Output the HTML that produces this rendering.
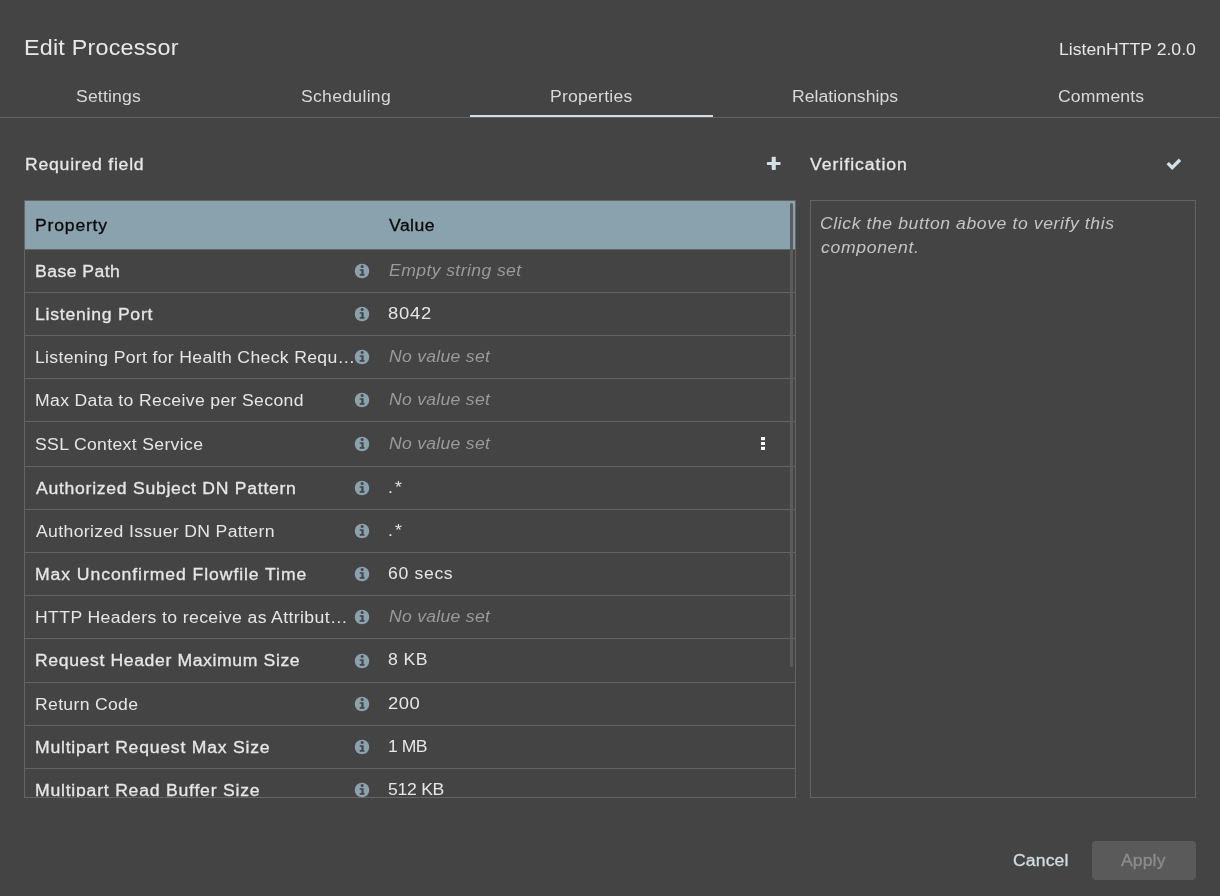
<!DOCTYPE html>
<html><head><meta charset="utf-8">
<style>
html,body{margin:0;padding:0;width:1220px;height:896px;overflow:hidden;background:#444444;}
body{position:relative;font-family:"Liberation Sans",sans-serif;}
.a{position:absolute;white-space:pre;line-height:30px;font-family:"Liberation Sans",sans-serif;will-change:transform;}
.s{position:absolute;}
</style></head>
<body>
<div class="s" style="left:0;top:117px;width:1220px;height:1px;background:#646464"></div>
<div class="s" style="left:470px;top:115px;width:243px;height:2px;background:#cfe0ea"></div>
<svg class="s" style="left:766px;top:156px" width="16" height="15" viewBox="0 0 16 15">
<rect x="0.9" y="5.9" width="13.7" height="3.2" rx="0.8" fill="#d3e0e6"/>
<rect x="5.7" y="0.7" width="4.1" height="13.3" rx="0.8" fill="#d3e0e6"/>
</svg>
<svg class="s" style="left:1164px;top:156px" width="20" height="16" viewBox="0 0 20 16">
<polyline points="3.7,7.1 8.2,11.6 16.0,3.8" fill="none" stroke="#d3e0e6" stroke-width="3.4"/>
</svg>
<div class="s" style="left:24px;top:200px;width:770px;height:596px;border:1px solid #646464"></div>
<div class="s" style="left:25px;top:201px;width:770px;height:48px;background:#8aa2ae"></div>
<div class="s" style="left:25px;top:249px;width:770px;height:1px;background:#646464"></div>
<svg class="s" style="left:353.6px;top:263.0px" width="16" height="16" viewBox="0 0 16 16"><circle cx="8" cy="8" r="7.25" fill="#8aa2ae"/><circle cx="8.1" cy="3.6" r="1.5" fill="#444444"/><path d="M5.7,6.2H9.6V11H10.4V12.7H5.7V11H7.4V7.8H5.7Z" fill="#444444"/></svg>
<div class="s" style="left:25px;top:292px;width:770px;height:1px;background:#646464"></div>
<svg class="s" style="left:353.6px;top:306.0px" width="16" height="16" viewBox="0 0 16 16"><circle cx="8" cy="8" r="7.25" fill="#8aa2ae"/><circle cx="8.1" cy="3.6" r="1.5" fill="#444444"/><path d="M5.7,6.2H9.6V11H10.4V12.7H5.7V11H7.4V7.8H5.7Z" fill="#444444"/></svg>
<div class="s" style="left:25px;top:335px;width:770px;height:1px;background:#646464"></div>
<svg class="s" style="left:353.6px;top:349.0px" width="16" height="16" viewBox="0 0 16 16"><circle cx="8" cy="8" r="7.25" fill="#8aa2ae"/><circle cx="8.1" cy="3.6" r="1.5" fill="#444444"/><path d="M5.7,6.2H9.6V11H10.4V12.7H5.7V11H7.4V7.8H5.7Z" fill="#444444"/></svg>
<div class="s" style="left:25px;top:378px;width:770px;height:1px;background:#646464"></div>
<svg class="s" style="left:353.6px;top:392.0px" width="16" height="16" viewBox="0 0 16 16"><circle cx="8" cy="8" r="7.25" fill="#8aa2ae"/><circle cx="8.1" cy="3.6" r="1.5" fill="#444444"/><path d="M5.7,6.2H9.6V11H10.4V12.7H5.7V11H7.4V7.8H5.7Z" fill="#444444"/></svg>
<div class="s" style="left:25px;top:421px;width:770px;height:1px;background:#646464"></div>
<svg class="s" style="left:353.6px;top:436.0px" width="16" height="16" viewBox="0 0 16 16"><circle cx="8" cy="8" r="7.25" fill="#8aa2ae"/><circle cx="8.1" cy="3.6" r="1.5" fill="#444444"/><path d="M5.7,6.2H9.6V11H10.4V12.7H5.7V11H7.4V7.8H5.7Z" fill="#444444"/></svg>
<div class="s" style="left:25px;top:466px;width:770px;height:1px;background:#646464"></div>
<svg class="s" style="left:761.3px;top:436px" width="4" height="16" viewBox="0 0 4 16"><rect x="0" y="1" width="4" height="3.2" fill="#fff"/><rect x="0" y="6" width="4" height="3" fill="#fff"/><rect x="0" y="10.8" width="4" height="3.2" fill="#fff"/></svg>
<svg class="s" style="left:353.6px;top:480.0px" width="16" height="16" viewBox="0 0 16 16"><circle cx="8" cy="8" r="7.25" fill="#8aa2ae"/><circle cx="8.1" cy="3.6" r="1.5" fill="#444444"/><path d="M5.7,6.2H9.6V11H10.4V12.7H5.7V11H7.4V7.8H5.7Z" fill="#444444"/></svg>
<div class="s" style="left:25px;top:509px;width:770px;height:1px;background:#646464"></div>
<svg class="s" style="left:353.6px;top:523.0px" width="16" height="16" viewBox="0 0 16 16"><circle cx="8" cy="8" r="7.25" fill="#8aa2ae"/><circle cx="8.1" cy="3.6" r="1.5" fill="#444444"/><path d="M5.7,6.2H9.6V11H10.4V12.7H5.7V11H7.4V7.8H5.7Z" fill="#444444"/></svg>
<div class="s" style="left:25px;top:552px;width:770px;height:1px;background:#646464"></div>
<svg class="s" style="left:353.6px;top:566.0px" width="16" height="16" viewBox="0 0 16 16"><circle cx="8" cy="8" r="7.25" fill="#8aa2ae"/><circle cx="8.1" cy="3.6" r="1.5" fill="#444444"/><path d="M5.7,6.2H9.6V11H10.4V12.7H5.7V11H7.4V7.8H5.7Z" fill="#444444"/></svg>
<div class="s" style="left:25px;top:595px;width:770px;height:1px;background:#646464"></div>
<svg class="s" style="left:353.6px;top:609.0px" width="16" height="16" viewBox="0 0 16 16"><circle cx="8" cy="8" r="7.25" fill="#8aa2ae"/><circle cx="8.1" cy="3.6" r="1.5" fill="#444444"/><path d="M5.7,6.2H9.6V11H10.4V12.7H5.7V11H7.4V7.8H5.7Z" fill="#444444"/></svg>
<div class="s" style="left:25px;top:638px;width:770px;height:1px;background:#646464"></div>
<svg class="s" style="left:353.6px;top:652.5px" width="16" height="16" viewBox="0 0 16 16"><circle cx="8" cy="8" r="7.25" fill="#8aa2ae"/><circle cx="8.1" cy="3.6" r="1.5" fill="#444444"/><path d="M5.7,6.2H9.6V11H10.4V12.7H5.7V11H7.4V7.8H5.7Z" fill="#444444"/></svg>
<div class="s" style="left:25px;top:682px;width:770px;height:1px;background:#646464"></div>
<svg class="s" style="left:353.6px;top:696.0px" width="16" height="16" viewBox="0 0 16 16"><circle cx="8" cy="8" r="7.25" fill="#8aa2ae"/><circle cx="8.1" cy="3.6" r="1.5" fill="#444444"/><path d="M5.7,6.2H9.6V11H10.4V12.7H5.7V11H7.4V7.8H5.7Z" fill="#444444"/></svg>
<div class="s" style="left:25px;top:725px;width:770px;height:1px;background:#646464"></div>
<svg class="s" style="left:353.6px;top:739.0px" width="16" height="16" viewBox="0 0 16 16"><circle cx="8" cy="8" r="7.25" fill="#8aa2ae"/><circle cx="8.1" cy="3.6" r="1.5" fill="#444444"/><path d="M5.7,6.2H9.6V11H10.4V12.7H5.7V11H7.4V7.8H5.7Z" fill="#444444"/></svg>
<div class="s" style="left:25px;top:768px;width:770px;height:1px;background:#646464"></div>
<svg class="s" style="left:353.6px;top:782.0px" width="16" height="16" viewBox="0 0 16 16"><circle cx="8" cy="8" r="7.25" fill="#8aa2ae"/><circle cx="8.1" cy="3.6" r="1.5" fill="#444444"/><path d="M5.7,6.2H9.6V11H10.4V12.7H5.7V11H7.4V7.8H5.7Z" fill="#444444"/></svg>
<div class="s" style="left:790px;top:203px;width:3px;height:464px;border-radius:1.5px;background:#5c5c5c"></div>
<div class="s" style="left:810px;top:200px;width:384px;height:596px;border:1px solid #646464"></div>
<div class="s" style="left:1092px;top:841px;width:104px;height:39px;border-radius:4px;background:#5a5a5a"></div>
<div style="position:absolute;left:0;top:0;width:1220px;height:896px;overflow:hidden">
<div class="a" style="left:24px;top:33px;font-size:22px;letter-spacing:0.203px;color:#e8e8e8;transform:scaleX(1.06);transform-origin:0 0;">Edit Processor</div>
<div class="a" style="left:1059px;top:35px;font-size:16px;letter-spacing:0.012px;color:#e6e6e6;transform:scaleX(1.1);transform-origin:0 0;">ListenHTTP 2.0.0</div>
<div class="a" style="left:76px;top:82px;font-size:16px;letter-spacing:0.156px;color:#d9d9d9;transform:scaleX(1.1);transform-origin:0 0;">Settings</div>
<div class="a" style="left:301px;top:82px;font-size:16px;letter-spacing:0.263px;color:#d9d9d9;transform:scaleX(1.1);transform-origin:0 0;">Scheduling</div>
<div class="a" style="left:550px;top:82px;font-size:16px;letter-spacing:0.202px;color:#d9d9d9;transform:scaleX(1.1);transform-origin:0 0;">Properties</div>
<div class="a" style="left:792px;top:82px;font-size:16px;letter-spacing:0.030px;color:#d9d9d9;transform:scaleX(1.1);transform-origin:0 0;">Relationships</div>
<div class="a" style="left:1058px;top:82px;font-size:16px;letter-spacing:0.130px;color:#d9d9d9;transform:scaleX(1.1);transform-origin:0 0;">Comments</div>
<div class="a" style="left:25px;top:150px;font-size:16px;letter-spacing:0.699px;color:#e6e6e6;transform:scaleX(1.1);transform-origin:0 0;-webkit-text-stroke:0.3px #e6e6e6;">Required field</div>
<div class="a" style="left:810px;top:150px;font-size:16px;letter-spacing:0.893px;color:#e6e6e6;transform:scaleX(1.1);transform-origin:0 0;-webkit-text-stroke:0.3px #e6e6e6;">Verification</div>
<div class="a" style="left:35px;top:211px;font-size:16px;letter-spacing:0.727px;color:#0a0a0a;transform:scaleX(1.1);transform-origin:0 0;-webkit-text-stroke:0.3px #0a0a0a;">Property</div>
<div class="a" style="left:389px;top:211px;font-size:16px;letter-spacing:0.409px;color:#0a0a0a;transform:scaleX(1.1);transform-origin:0 0;-webkit-text-stroke:0.3px #0a0a0a;">Value</div>
<div class="a" style="left:820px;top:209px;font-size:16px;letter-spacing:0.530px;color:#c4c4c4;transform:scaleX(1.1);transform-origin:0 0;font-style:italic;">Click the button above to verify this</div>
<div class="a" style="left:821px;top:233px;font-size:16px;letter-spacing:0.606px;color:#c4c4c4;transform:scaleX(1.1);transform-origin:0 0;font-style:italic;">component.</div>
<div class="a" style="left:1013px;top:846px;font-size:16px;letter-spacing:0.109px;color:#cfdde4;transform:scaleX(1.1);transform-origin:0 0;-webkit-text-stroke:0.3px #cfdde4;">Cancel</div>
<div class="a" style="left:1121px;top:846px;font-size:16px;letter-spacing:0.091px;color:#8c8c8c;transform:scaleX(1.1);transform-origin:0 0;-webkit-text-stroke:0.3px #8c8c8c;">Apply</div>
</div>
<div style="position:absolute;left:25px;top:250px;width:770px;height:547px;overflow:hidden">
<div style="position:absolute;left:-25px;top:-250px;width:1220px;height:896px">
<div class="a" style="left:35px;top:257px;font-size:16px;letter-spacing:0.409px;color:#e6e6e6;transform:scaleX(1.1);transform-origin:0 0;-webkit-text-stroke:0.3px #e6e6e6;">Base Path</div>
<div class="a" style="left:389px;top:256px;font-size:16px;letter-spacing:0.364px;color:#9a9a9a;transform:scaleX(1.1);transform-origin:0 0;font-style:italic;">Empty string set</div>
<div class="a" style="left:35px;top:300px;font-size:16px;letter-spacing:0.685px;color:#e6e6e6;transform:scaleX(1.1);transform-origin:0 0;-webkit-text-stroke:0.3px #e6e6e6;">Listening Port</div>
<div class="a" style="left:388px;top:299px;font-size:16px;letter-spacing:0.638px;color:#e6e6e6;transform:scaleX(1.15);transform-origin:0 0;">8042</div>
<div class="a" style="left:35px;top:343px;font-size:16px;letter-spacing:0.303px;color:#e6e6e6;transform:scaleX(1.1);transform-origin:0 0;">Listening Port for Health Check Requ…</div>
<div class="a" style="left:389px;top:342px;font-size:16px;letter-spacing:0.248px;color:#9a9a9a;transform:scaleX(1.1);transform-origin:0 0;font-style:italic;">No value set</div>
<div class="a" style="left:35px;top:386px;font-size:16px;letter-spacing:0.320px;color:#e6e6e6;transform:scaleX(1.1);transform-origin:0 0;">Max Data to Receive per Second</div>
<div class="a" style="left:389px;top:385px;font-size:16px;letter-spacing:0.248px;color:#9a9a9a;transform:scaleX(1.1);transform-origin:0 0;font-style:italic;">No value set</div>
<div class="a" style="left:35px;top:430px;font-size:16px;letter-spacing:0.313px;color:#e6e6e6;transform:scaleX(1.1);transform-origin:0 0;">SSL Context Service</div>
<div class="a" style="left:389px;top:429px;font-size:16px;letter-spacing:0.248px;color:#9a9a9a;transform:scaleX(1.1);transform-origin:0 0;font-style:italic;">No value set</div>
<div class="a" style="left:36px;top:474px;font-size:16px;letter-spacing:0.656px;color:#e6e6e6;transform:scaleX(1.1);transform-origin:0 0;-webkit-text-stroke:0.3px #e6e6e6;">Authorized Subject DN Pattern</div>
<div class="a" style="left:388px;top:473px;font-size:16px;letter-spacing:2.000px;color:#e6e6e6;transform:scaleX(1.1);transform-origin:0 0;">.*</div>
<div class="a" style="left:36px;top:517px;font-size:16px;letter-spacing:0.323px;color:#e6e6e6;transform:scaleX(1.1);transform-origin:0 0;">Authorized Issuer DN Pattern</div>
<div class="a" style="left:388px;top:516px;font-size:16px;letter-spacing:2.000px;color:#e6e6e6;transform:scaleX(1.1);transform-origin:0 0;">.*</div>
<div class="a" style="left:35px;top:560px;font-size:16px;letter-spacing:0.838px;color:#e6e6e6;transform:scaleX(1.1);transform-origin:0 0;-webkit-text-stroke:0.3px #e6e6e6;">Max Unconfirmed Flowfile Time</div>
<div class="a" style="left:388px;top:559px;font-size:16px;letter-spacing:0.606px;color:#e6e6e6;transform:scaleX(1.1);transform-origin:0 0;">60 secs</div>
<div class="a" style="left:35px;top:603px;font-size:16px;letter-spacing:0.353px;color:#e6e6e6;transform:scaleX(1.1);transform-origin:0 0;">HTTP Headers to receive as Attribut…</div>
<div class="a" style="left:389px;top:602px;font-size:16px;letter-spacing:0.248px;color:#9a9a9a;transform:scaleX(1.1);transform-origin:0 0;font-style:italic;">No value set</div>
<div class="a" style="left:35px;top:646px;font-size:16px;letter-spacing:0.566px;color:#e6e6e6;transform:scaleX(1.1);transform-origin:0 0;-webkit-text-stroke:0.3px #e6e6e6;">Request Header Maximum Size</div>
<div class="a" style="left:388px;top:645px;font-size:16px;letter-spacing:0.424px;color:#e6e6e6;transform:scaleX(1.1);transform-origin:0 0;">8 KB</div>
<div class="a" style="left:35px;top:690px;font-size:16px;letter-spacing:0.291px;color:#e6e6e6;transform:scaleX(1.1);transform-origin:0 0;">Return Code</div>
<div class="a" style="left:388px;top:689px;font-size:16px;letter-spacing:0.435px;color:#e6e6e6;transform:scaleX(1.15);transform-origin:0 0;">200</div>
<div class="a" style="left:35px;top:733px;font-size:16px;letter-spacing:0.705px;color:#e6e6e6;transform:scaleX(1.1);transform-origin:0 0;-webkit-text-stroke:0.3px #e6e6e6;">Multipart Request Max Size</div>
<div class="a" style="left:388px;top:732px;font-size:16px;letter-spacing:-0.455px;color:#e6e6e6;transform:scaleX(1.1);transform-origin:0 0;">1 MB</div>
<div class="a" style="left:35px;top:776px;font-size:16px;letter-spacing:0.705px;color:#e6e6e6;transform:scaleX(1.1);transform-origin:0 0;-webkit-text-stroke:0.3px #e6e6e6;">Multipart Read Buffer Size</div>
<div class="a" style="left:388px;top:775px;font-size:16px;letter-spacing:-0.255px;color:#e6e6e6;transform:scaleX(1.1);transform-origin:0 0;">512 KB</div>
</div></div>
</body></html>
